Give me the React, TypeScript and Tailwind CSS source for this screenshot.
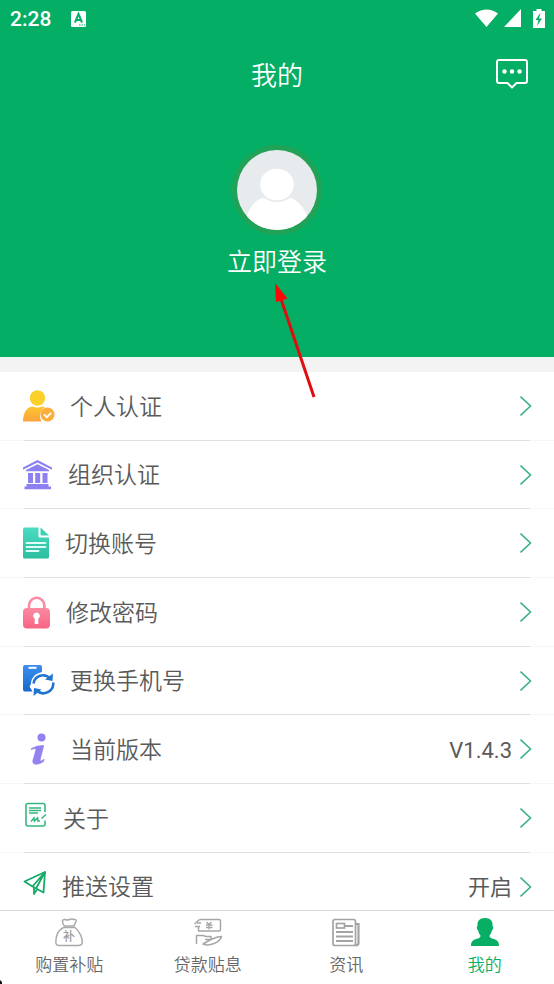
import React from 'react';

interface MenuItem {
  label: string;
  icon: React.ReactNode;
  value?: string;
}

interface TabItem {
  label: string;
  icon: React.ReactNode;
  active?: boolean;
}

const PersonIcon = () => (
  <svg width="32" height="32" viewBox="0 0 32 32">
    <defs>
      <linearGradient id="person" x1="0" y1="0" x2="0" y2="1">
        <stop offset="0" stopColor="#fbc62e" />
        <stop offset="1" stopColor="#fca33c" />
      </linearGradient>
    </defs>
    <circle cx="14.500" cy="8" r="7.700" fill="#fcd02b" />
    <path d="M0 31.500C0 22 4.500 16.500 10 16.500c2.500 1.300 6.500 1.300 9 0 1 0 2 .3 3 .8-4.500 3-6.500 8.500-3.500 14.200z" fill="url(#person)" />
    <circle cx="24.500" cy="24.500" r="7" fill="#fbae3a" />
    <path d="M21 24.500l2.800 2.700 4.400-4.400" fill="none" stroke="#fff" strokeWidth="1.800" />
  </svg>
);

const BankIcon = () => (
  <svg width="30" height="30" viewBox="0 0 30 30" fill="#8d80f0">
    <path d="M14.500 0L29 7.500v2.300L14.500 2.600 0 9.800V7.500z" />
    <path d="M14.500 4.200L26 10v1.200H3V10z" />
    <path d="M5 13h5v10H5zM12.200 13h5v10h-5zM19.500 13h5v10h-5z" />
    <path d="M3.500 24h22v2.500h-22zM1.500 26.500h26.500v2.800H1.500z" />
  </svg>
);

const DocumentIcon = () => (
  <svg width="27" height="32" viewBox="0 0 27 32">
    <defs>
      <linearGradient id="doc" x1="0" y1="0" x2="0" y2="1">
        <stop offset="0" stopColor="#4adcc2" />
        <stop offset="1" stopColor="#2cbd9f" />
      </linearGradient>
    </defs>
    <path d="M2 .5h13.500v8.500q0 1.500 1.500 1.500h9V30q0 1.500-1.500 1.500h-23Q0 31.500 0 30V2.500Q0 .5 2 .5z" fill="url(#doc)" />
    <path d="M17.500.5l8.500 8h-7q-1.500 0-1.500-1.500z" fill="#3fd0b4" />
    <path d="M3.500 16h19M3.500 20h19M3.500 24h12" stroke="#dcfff7" strokeWidth="1.800" strokeLinecap="round" />
  </svg>
);

const LockIcon = () => (
  <svg width="28" height="33" viewBox="0 0 28 33">
    <defs>
      <linearGradient id="lock" x1="0" y1="0" x2="0" y2="1">
        <stop offset="0" stopColor="#fb8aa3" />
        <stop offset="1" stopColor="#f76584" />
      </linearGradient>
    </defs>
    <path d="M6 13V9.500a7.700 7.700 0 0 1 15.400 0V13" fill="none" stroke="#f98ca4" strokeWidth="2.600" />
    <rect y="12" width="27" height="20.500" rx="4" fill="url(#lock)" />
    <path d="M13.500 16.500a3.500 3.500 0 0 1 1.700 6.500l.3 4.500q-2 1-4 0l.3-4.500a3.500 3.500 0 0 1 1.700-6.500z" fill="#fff" />
  </svg>
);

const PhoneIcon = () => (
  <svg width="32" height="32" viewBox="0 0 32 32">
    <defs>
      <linearGradient id="phone" x1="0" y1="0" x2="0" y2="1">
        <stop offset="0" stopColor="#3c8fee" />
        <stop offset="1" stopColor="#1768cc" />
      </linearGradient>
    </defs>
    <path d="M2 0h15q2 0 2 2v5C12 8.500 8 13 8 19l-1.500 2.500 3 5H2q-2 0-2-2V2q0-2 2-2z" fill="url(#phone)" />
    <path d="M5.500 2.800h8" stroke="#fff" strokeWidth="2" />
    <path d="M10.500 18.500a9.500 9.500 0 0 1 16.500-5" fill="none" stroke="#2173d0" strokeWidth="2.600" />
    <path d="M30 8.500l-.5 7.500-7.500-1.500z" fill="#2173d0" />
    <path d="M30.200 17.500a9.800 9.800 0 0 1-16.500 8" fill="none" stroke="#2173d0" strokeWidth="2.600" />
    <path d="M10.500 31l.5-8 7.500 1.500z" fill="#2173d0" />
  </svg>
);

const InfoIcon = () => (
  <svg width="32" height="32" viewBox="0 0 32 32" fill="#9480ee">
    <circle cx="18.500" cy="4.500" r="4" />
    <path d="M8.500 15.500Q14 12 20.800 12.500L17.300 26q-.6 2.700 1.200 1.800l2.700-1.600-.7 2.300Q16 31.800 12.500 31.300q-3.600-.6-2.500-4.300L12.800 17q.2-1.800-1.300-1.500l-3.400 1.200z" stroke="#9480ee" strokeWidth=".6" />
  </svg>
);

const AboutIcon = () => (
  <svg width="25" height="32" viewBox="0 2 25 32" fill="none" stroke="#35b780" strokeWidth="1.600">
    <path d="M22 12V5.500q0-2-2-2H5q-2 0-2 2V24q0 2 2 2h15q2 0 2-2v-3.500" />
    <path d="M6 8h12M6 10.500h12M6 13h9" strokeWidth="1.300" />
    <path d="M8 21.500l3-3.500.500 3 3-3 .5 3h2M18.500 18.500l4.500-4" strokeWidth="1.600" />
  </svg>
);

const SendIcon = () => (
  <svg width="24" height="32" viewBox="0 2 24 32" fill="none" stroke="#17a968" strokeWidth="1.800" strokeLinejoin="round">
    <path d="M22 3L1.500 12.500l8 5 11 6z" />
    <path d="M22 3L9.500 17.500M22 3L13 19.500M11 18.500V25l3-4.500" />
  </svg>
);

const MoneyBagIcon = () => (
  <svg width="30" height="30" viewBox="0 0 30 30" fill="none" stroke="#a9a9a9" strokeWidth="1.500" strokeLinejoin="round">
    <path d="M10.500 8Q8.500 6 8.500 3.500q0-2.500 2.500-2 2 1 4.500 0 2.500-1 4.500 0 2.500-.5 2 2L20 8z" />
    <path d="M9.500 9.500h11.500C26 13.500 28.500 20.500 28.300 24.500q-.3 3-3.800 3h-19q-3.500 0-3.700-3C1.800 18 4.500 12 9.500 9.500z" />
    <text x="15" y="23" textAnchor="middle" fontSize="12" fontWeight="500" fill="#9c9c9c" stroke="none" fontFamily="'Noto Sans CJK SC', sans-serif">补</text>
  </svg>
);

const LoanIcon = () => (
  <svg width="30" height="30" viewBox="0 0 30 30" fill="none" stroke="#a6a6a6" strokeWidth="1.500" strokeLinejoin="round">
    <path d="M6.500 1.500h19.500q1.500 0 1.500 1.500v8.500q0 1.500-1.500 1.500H5.500V9" />
    <path d="M6.500 1.500L1.500 6M4 5h4M2 8.500h5" />
    <path d="M13.500 4l2.500 2.500L18.500 4M13 7h6.500M13 9.500h6.500M16 7v4.500" strokeWidth="1.300" />
    <path d="M3.500 26V17.500h6.500l3 1h5v3h-6M18 21.500l6.500-2.500 4-.5q-1 4.500-7.500 7-6 2.500-11 .5z" />
  </svg>
);

const NewsIcon = () => (
  <svg width="30" height="30" viewBox="0 0 30 30" fill="none" stroke="#a3a3a3" strokeWidth="1.700">
    <rect x="2" y="1.500" width="22.500" height="26" rx="2" />
    <path d="M25 6h2.500v19q0 2.500-3 2.500" strokeWidth="2.200" />
    <rect x="5.500" y="5.500" width="8" height="4.500" />
    <path d="M14 8h8M5 14h17M5 18.500h17M5 23h17" strokeWidth="2" />
  </svg>
);

const ProfileIcon = () => (
  <svg width="30" height="30" viewBox="0 0 30 30" fill="#07af65">
    <path d="M15 0c5.500 0 8 3 7.500 8 1.200.3.600 4-.7 4.500-.5 3-1.500 4-2.300 5 0 2 1 2.500 3.500 3.300 4.500 1.200 6 3 6 7.200H1c0-4.200 1.500-6 6-7.200 2.500-.8 3.500-1.300 3.500-3.300-.8-1-1.800-2-2.300-5-1.300-.5-1.900-4.200-.7-4.500C7 3 9.500 0 15 0z" />
  </svg>
);

const Chevron = () => (
  <svg width="12" height="22" viewBox="0 0 12 22" fill="none" stroke="#3db283" strokeWidth="1.600">
    <path d="M.5 1.500l10 9.500-10 9.500" />
  </svg>
);

const menuItems: MenuItem[] = [
  { label: '个人认证', icon: <PersonIcon /> },
  { label: '组织认证', icon: <BankIcon /> },
  { label: '切换账号', icon: <DocumentIcon /> },
  { label: '修改密码', icon: <LockIcon /> },
  { label: '更换手机号', icon: <PhoneIcon /> },
  { label: '当前版本', icon: <InfoIcon />, value: 'V1.4.3' },
  { label: '关于', icon: <AboutIcon /> },
  { label: '推送设置', icon: <SendIcon />, value: '开启' },
];

const tabs: TabItem[] = [
  { label: '购置补贴', icon: <MoneyBagIcon /> },
  { label: '贷款贴息', icon: <LoanIcon /> },
  { label: '资讯', icon: <NewsIcon /> },
  { label: '我的', icon: <ProfileIcon />, active: true },
];

const StatusBar = () => (
  <div className="flex h-9 items-center justify-between pt-0.5 pr-2 pl-2.5">
    <div className="flex items-center gap-5">
      <span className="pt-px text-[21px] font-medium">2:28</span>
      <svg width="16" height="16" viewBox="0 0 16 16">
        <rect width="15" height="16" rx="1.500" fill="#fff" />
        <path d="M4 11.500L7.500 3 11 11.500M5.300 9h4.400" fill="none" stroke="#07af65" strokeWidth="2" />
        <path d="M8 14h1.500M10.500 14H12M13 14h1" stroke="#07af65" />
      </svg>
    </div>
    <svg width="71" height="20" viewBox="0 0 71 20" fill="#fff">
      <path d="M0 4.500Q11.500-3.500 23 4.500L11.500 18z" />
      <path d="M46 0v18H29z" />
      <path d="M58 2h3.500V0h5v2H70v17H58z" />
      <path d="M65.500 3.500l-5 7.500h3L62 17l5-7.500h-3z" fill="#07af65" />
    </svg>
  </div>
);

const Header = () => (
  <header className="relative h-[357px] shrink-0 bg-[#04ae64] text-white">
    <StatusBar />
    <div className="grid h-[76px] grid-cols-3 items-center px-[26px]">
      <h1 className="col-start-2 pt-1 text-center text-[26px] font-[350]">我的</h1>
      <button type="button" aria-label="消息" className="justify-self-end">
        <svg width="32" height="30" viewBox="0 0 32 30" fill="none" stroke="#fff" strokeWidth="2">
          <path d="M3 1h26q2 0 2 2v19q0 2-2 2h-8.500L16 28.500 11.500 24H3q-2 0-2-2V3q0-2 2-2z" strokeLinejoin="round" />
          <path d="M8.500 12.500h.01M16 12.500h.01M23.500 12.500h.01" strokeWidth="4.500" strokeLinecap="round" />
        </svg>
      </button>
    </div>
    <button type="button" className="mx-auto mt-8 flex flex-col items-center">
      <svg width="92" height="92" viewBox="0 0 92 92">
        <defs>
          <clipPath id="avatar">
            <circle cx="46" cy="46" r="40" />
          </clipPath>
        </defs>
        <circle cx="46" cy="46" r="45" fill="#22a257" />
        <circle cx="46" cy="46" r="40" fill="#e8ebed" />
        <g clipPath="url(#avatar)" fill="#fff">
          <path d="M14 76q7-20 18-22 14 6 28 0 11 4 18 22l-12 14H28z" />
          <ellipse cx="46" cy="40.500" rx="17.800" ry="16.800" stroke="#e8ebed" strokeWidth="2" />
        </g>
      </svg>
      <span className="mt-[9px] text-[25px] leading-9 font-[350]">立即登录</span>
    </button>
    <svg className="pointer-events-none absolute top-[282px] left-1/2 -ml-1" width="44" height="118" viewBox="0 0 44 118">
      <path d="M7 14l34 101" stroke="#df0d10" strokeWidth="3" />
      <path d="M2 1l12.500 15.500L3 20z" fill="#ff0505" />
    </svg>
  </header>
);

const MenuRow = ({ item }: { item: MenuItem }) => (
  <li className="flex h-[69px] flex-col nth-[3n+2]:h-[68px]">
    <button type="button" className="flex w-full flex-1 cursor-pointer items-center pr-[22px] pl-[23px] text-[#5a5a5a]">
      {item.icon}
      <span className="ml-[15px] pt-1 text-[23px] font-[350]">{item.label}</span>
      <span className="mr-2 ml-auto pt-0.5 text-[22px]">{item.value}</span>
      <Chevron />
    </button>
    <div className="bg-[#f6f6f6] px-6">
      <div className="h-px bg-[#dfdfdf]" />
    </div>
  </li>
);

const TabBar = () => (
  <nav className="relative grid h-[74px] shrink-0 grid-cols-4 border-t border-[#d9d9d9] bg-white">
    {tabs.map((tab) => (
      <a
        key={tab.label}
        href="#"
        className={`flex flex-col items-center pt-[7px] text-[17px] leading-6 font-[350] ${tab.active ? 'text-[#07af65]' : 'text-[#666666]'}`}
      >
        {tab.icon}
        <span className="mt-[5px]">{tab.label}</span>
      </a>
    ))}
    <svg className="absolute bottom-0 left-0" width="3" height="4" viewBox="0 0 3 4">
      <path d="M0 0l2 2v2H0z" fill="#06141c" />
    </svg>
  </nav>
);

export default function App() {
  return (
    <div className="flex h-screen flex-col bg-white font-['Roboto','Noto_Sans_CJK_SC',sans-serif]">
      <Header />
      <main className="min-h-0 flex-1 overflow-y-auto border-t-[15px] border-[#f3f3f3] [scrollbar-width:none]">
        <ul>
          {menuItems.map((item) => (
            <MenuRow key={item.label} item={item} />
          ))}
        </ul>
      </main>
      <TabBar />
    </div>
  );
}
